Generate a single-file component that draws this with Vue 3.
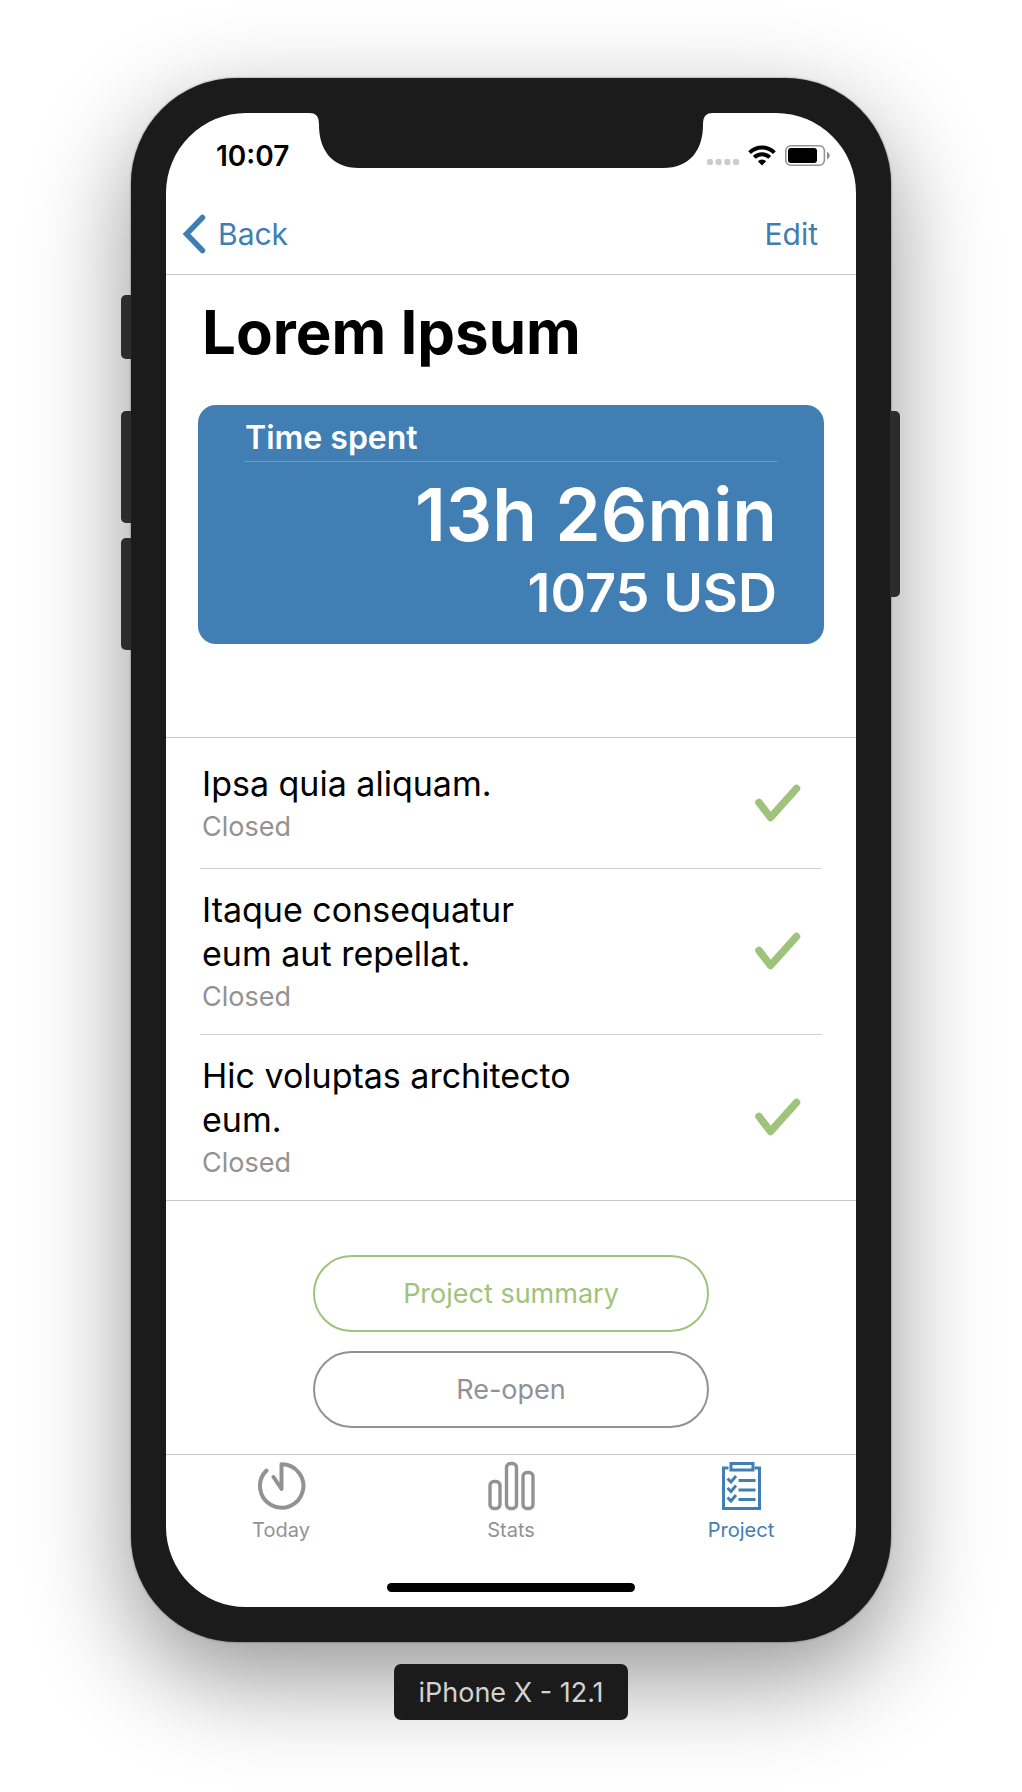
<script setup>
const tasks = [
  { title: 'Ipsa quia aliquam.', status: 'Closed' },
  { title: 'Itaque consequatur eum aut repellat.', status: 'Closed' },
  { title: 'Hic voluptas architecto eum.', status: 'Closed' },
]
</script>

<template>
  <div class="stage">
    <div class="phone">
      <i class="side mute"></i>
      <i class="side volume-up"></i>
      <i class="side volume-down"></i>
      <i class="side power"></i>

      <div class="screen">
        <svg class="notch" width="404" height="56" viewBox="0 0 404 56" aria-hidden="true">
          <path d="M0 0V1C7 1 10 4 10 13C10 38 23 56 50 56H354C381 56 394 38 394 13C394 4 397 1 404 1V0Z" fill="#1b1b1b" />
        </svg>

        <header class="status">
          <span class="clock">10:07</span>
          <div class="indicators">
            <svg class="signal" width="32" height="6" viewBox="0 0 32 6" fill="#cccccc" aria-hidden="true">
              <rect width="6" height="6" rx="2" /><rect x="8.600" width="6" height="6" rx="2" />
              <rect x="17.300" width="6" height="6" rx="2" /><rect x="26" width="6" height="6" rx="2" />
            </svg>
            <svg class="wifi" width="28" height="21" viewBox="0 0 28 21" fill="none" stroke="#000" aria-hidden="true">
              <path d="M1.6 7.6A17.5 17.5 0 0 1 26.4 7.6" stroke-width="4" />
              <path d="M6.3 12.4A11 11 0 0 1 21.7 12.4" stroke-width="4" />
              <path d="M14 20.5L9.8 16.3A6 6 0 0 1 18.2 16.3Z" fill="#000" stroke="none" />
            </svg>
            <svg class="battery" width="45" height="21" viewBox="0 0 45 21" aria-hidden="true">
              <rect x=".8" y=".8" width="38.6" height="19.4" rx="5" fill="none" stroke="#949494" stroke-width="1.6" />
              <rect x="3" y="3" width="29" height="15" rx="3" />
              <path d="M42 7C45.5 8 45.5 13 42 14Z" fill="#888" />
            </svg>
          </div>
        </header>

        <nav class="navbar">
          <a href="#" class="back">
            <svg width="24" height="40" viewBox="0 0 24 40" fill="none" stroke="currentColor" stroke-width="5.500" stroke-linecap="round" stroke-linejoin="miter" aria-hidden="true">
              <path d="M20.500 3.500L4.500 20L20.500 36.500" />
            </svg>
            Back
          </a>
          <a href="#">Edit</a>
        </nav>

        <main>
          <h1>Lorem Ipsum</h1>
          <section class="card">
            <h2>Time spent</h2>
            <p class="time">13h 26min</p>
            <p class="money">1075 USD</p>
          </section>

          <ul class="tasks">
            <li v-for="task in tasks" :key="task.title">
              <div class="text">
                <span class="name">{{ task.title }}</span>
                <span class="state">{{ task.status }}</span>
              </div>
              <svg class="check" width="46" height="38" viewBox="0 0 46 38" fill="none" stroke="#9fc37a" stroke-width="7.500" stroke-linecap="round" stroke-linejoin="round" aria-hidden="true">
                <path d="M4 18.500L15.500 33.500L41.500 4.500" />
              </svg>
            </li>
          </ul>

          <div class="actions">
            <button type="button" class="summary">Project summary</button>
            <button type="button" class="reopen">Re-open</button>
          </div>
        </main>

        <footer>
          <nav class="tabs">
            <a href="#">
              <svg width="50" height="50" viewBox="0 0 50 50" fill="none" stroke="currentColor" stroke-width="4" stroke-linecap="round" stroke-linejoin="round" aria-hidden="true">
                <path d="M10.500 9.500A21.700 21.700 0 1 0 25.500 3.300V28L17.500 16" />
              </svg>
              Today
            </a>
            <a href="#">
              <svg width="50" height="50" viewBox="0 0 50 50" fill="none" stroke="currentColor" stroke-width="3.400" aria-hidden="true">
                <rect x="4" y="20.500" width="10" height="27" rx="4" />
                <rect x="20.500" y="2.500" width="10" height="45" rx="4" />
                <rect x="37" y="11.500" width="10" height="36" rx="4" />
              </svg>
              Stats
            </a>
            <a href="#" class="active" aria-current="page">
              <svg width="50" height="50" viewBox="0 0 50 50" fill="none" stroke="currentColor" aria-hidden="true">
                <path d="M12.500 7H7.500V47.500H43.500V7H38.500" stroke-width="3" />
                <rect x="15" y="2.500" width="22" height="6.500" stroke-width="3" />
                <path d="M22.500 19.500H39.500M22.500 29H39.500M22.500 38.500H39.500" stroke-width="3" />
                <path d="M11.500 17.500L15 21L20 15M11.500 27L15 30.500L20 24.500M11.500 36.500L15 40L20 34" stroke-width="3" />
              </svg>
              Project
            </a>
          </nav>
          <div class="home"></div>
        </footer>
      </div>
    </div>
    <div class="caption">iPhone X - 12.1</div>
  </div>
</template>

<style>
body {
  margin: 0;
  background: #fff;
}
</style>

<style scoped>
.stage {
  box-sizing: border-box;
  min-height: 100vh;
  padding: 78px 131px 72px;
  display: flex;
  flex-direction: column;
  align-items: center;
  gap: 22px;
  overflow: hidden;
  font-family: Inter, "Liberation Sans", sans-serif;
  color: #000;
}
.phone {
  position: relative;
  box-sizing: border-box;
  width: 100%;
  padding: 35px;
  border-radius: 106px;
  background: #1b1b1b;
  box-shadow: 0 0 2px rgba(0, 0, 0, 0.6), 0 36px 100px rgba(0, 0, 0, 0.42);
}
.side {
  position: absolute;
  left: -10px;
  width: 10px;
  border-radius: 5px 0 0 5px;
  background: #2c2c2c;
}
.mute { top: 217px; height: 64px; }
.volume-up { top: 333px; height: 112px; }
.volume-down { top: 460px; height: 112px; }
.power {
  left: auto;
  right: -9px;
  top: 333px;
  height: 186px;
  border-radius: 0 5px 5px 0;
}
.screen {
  position: relative;
  overflow: hidden;
  border-radius: 80px;
  background: #fff;
}
.notch {
  position: absolute;
  top: -1px;
  left: 50%;
  transform: translateX(-50%);
}
a {
  color: #3f7eb3;
  text-decoration: none;
}
h1, h2, p, ul {
  margin: 0;
  padding: 0;
  list-style: none;
}
.status {
  box-sizing: border-box;
  height: 81px;
  padding: 4px 26px 0 50px;
  display: flex;
  align-items: center;
  justify-content: space-between;
}
.clock {
  font-size: 28px;
  font-weight: 600;
}
.indicators {
  display: flex;
  align-items: flex-end;
  gap: 9px;
}
.signal {
  margin-bottom: 1px;
}
.navbar {
  height: 80px;
  padding: 0 38px 0 16px;
  display: flex;
  align-items: center;
  justify-content: space-between;
  border-bottom: 1px solid #c8c8ca;
  font-size: 30px;
}
.back {
  display: flex;
  align-items: center;
  gap: 12px;
}
h1 {
  padding: 20px 36px 36px;
  font-size: 60px;
  line-height: 74px;
  font-weight: 700;
}
.card {
  margin: 0 32px 93px;
  padding: 13px 46px 21px;
  border-radius: 18px;
  background: #407eb3;
  color: #fff;
}
.card h2 {
  padding: 0 1px 3px;
  border-bottom: 1px solid #6b99bf;
  font-size: 32px;
  line-height: 40px;
  font-weight: 600;
}
.card p {
  padding-right: 1px;
  text-align: right;
  font-weight: 600;
}
.card .time {
  margin-top: 13px;
  font-size: 73px;
  line-height: 80px;
}
.card .money {
  margin-top: 8px;
  font-size: 54px;
  line-height: 60px;
}
.tasks {
  padding: 0 34px;
  border-top: 1px solid #c8c8ca;
  border-bottom: 1px solid #c8c8ca;
}
.tasks li {
  box-sizing: border-box;
  min-height: 130px;
  padding: 19px 21px 16px 2px;
  display: flex;
  align-items: center;
  justify-content: space-between;
}
.tasks li + li {
  border-top: 1px solid #d2d2d4;
}
.text {
  width: 64%;
}
.name {
  display: block;
  font-size: 34px;
  line-height: 44px;
}
.state {
  display: block;
  font-size: 27px;
  line-height: 42px;
  color: #929296;
}
.check {
  margin-bottom: 4px;
}
.actions {
  padding: 54px 0 26px;
  display: flex;
  flex-direction: column;
  align-items: center;
  gap: 19px;
}
.actions button {
  width: 396px;
  max-width: 90%;
  height: 77px;
  border: 2px solid;
  border-radius: 39px;
  background: none;
  font-family: inherit;
  font-size: 27px;
}
.summary { color: #9fc37a; }
.reopen { color: #929296; }
.tabs {
  display: flex;
  border-top: 1px solid #c8c8ca;
}
.tabs a {
  flex: 1;
  padding-top: 6px;
  display: flex;
  flex-direction: column;
  align-items: center;
  gap: 7px;
  font-size: 20px;
  line-height: 24px;
  color: #929296;
}
.tabs .active { color: #407eb3; }
.home {
  width: 36%;
  height: 9px;
  margin: 41px auto 15px;
  border-radius: 5px;
  background: #000;
}
.caption {
  position: relative;
  padding: 2px 24px 0;
  border-radius: 7px;
  background: #1b1b1b;
  color: #d2d2d2;
  font-size: 27px;
  line-height: 54px;
}
</style>
